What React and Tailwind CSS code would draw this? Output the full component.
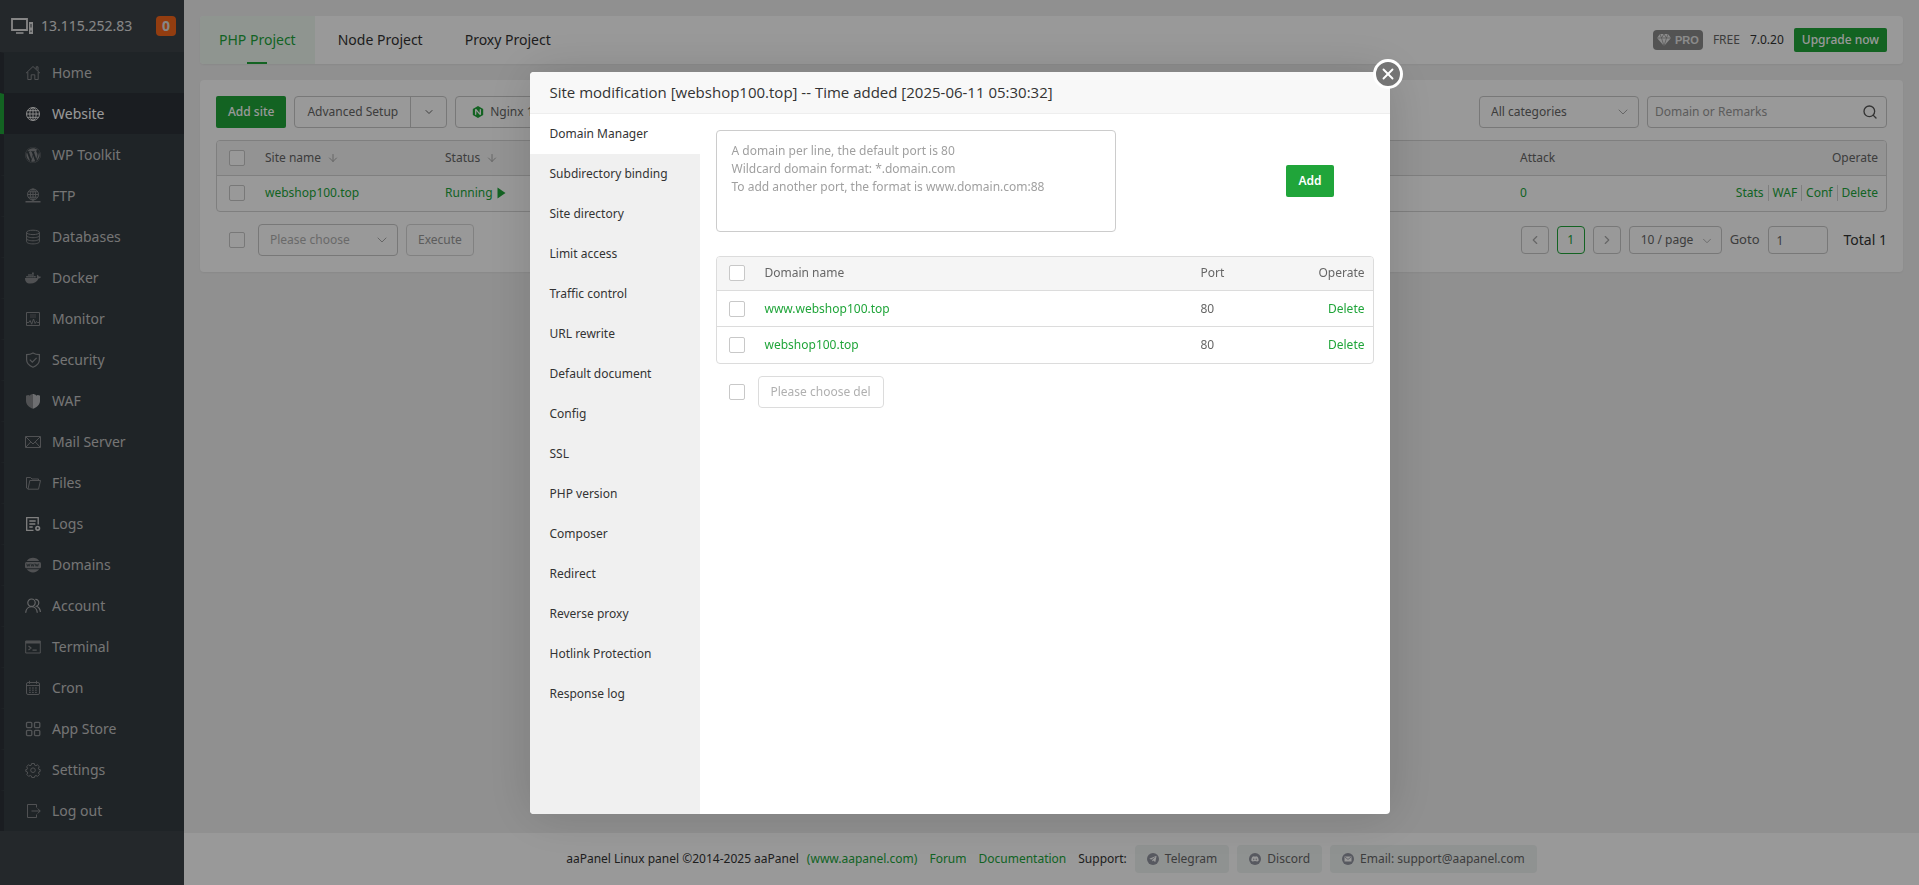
import { useState } from "react";
import { FaDiscord, FaDocker, FaTelegramPlane, FaWordpress } from "react-icons/fa";
import { SiNginx } from "react-icons/si";
import { ArrowDown, ChevronDown, ChevronLeft, ChevronRight, Search, X } from "lucide-react";

function Line({ children, w = 1, className = "" }) {
	return (
		<svg
			viewBox="0 0 16 16"
			className={`size-4 ${className}`}
			fill="none"
			stroke="currentColor"
			strokeWidth={w}
			aria-hidden="true"
		>
			{children}
		</svg>
	);
}

const icons = {
	home: (
		<Line>
			<path d="M1 8.2 8 1.5l7 6.7M2.8 7v7.5h3.4V9.8h3.6v4.7h3.4V7M11.2 4V1.8h1.8v3.9" />
		</Line>
	),
	website: (
		<Line className="text-[#e6e6e6]">
			<circle cx="8" cy="8" r="6.5" />
			<ellipse cx="8" cy="8" rx="3.2" ry="6.5" />
			<path d="M8 1.5v13M1.5 8h13M2.5 4.7h11M2.5 11.3h11" />
		</Line>
	),
	wordpress: <FaWordpress className="size-4" />,
	ftp: (
		<Line>
			<circle cx="8" cy="6.5" r="5.5" />
			<ellipse cx="8" cy="6.5" rx="2.7" ry="5.5" />
			<path d="M8 1v12M2.5 6.5h11M3.3 3.8h9.4M3.3 9.2h9.4" />
			<path d="M.5 13.8h15M6 13.8h4" strokeWidth="1.6" />
		</Line>
	),
	databases: (
		<Line>
			<ellipse cx="8" cy="3.4" rx="6.4" ry="2.2" />
			<path d="M1.6 3.4v9.3c0 1.2 2.8 2.2 6.4 2.2s6.4-1 6.4-2.2V3.4M1.6 6.5c0 1.2 2.8 2.2 6.4 2.2s6.4-1 6.4-2.2M1.6 9.6c0 1.2 2.8 2.2 6.4 2.2s6.4-1 6.4-2.2" />
		</Line>
	),
	docker: <FaDocker className="size-4" />,
	monitor: (
		<Line>
			<path d="M1.5 1.5h13v13h-13z" />
			<path d="M5 4h6M5 6h6" opacity=".6" />
			<path d="M1.5 11.5h2.3l1.3-2 1.6 3.7L8.5 8l1.6 4.5 1.4-2 1 1h2" />
		</Line>
	),
	security: (
		<Line w={1.2} className="text-[#8b8e91]">
			<path d="M8 1c2 1.2 4.2 1.6 6.4 1.6v5.2c0 3.6-2.8 6-6.4 7.4-3.6-1.4-6.4-3.8-6.4-7.4V2.6C3.8 2.6 6 2.2 8 1Z" />
			<path d="m4.8 7.6 2.5 2.5 4.3-4.3" />
		</Line>
	),
	waf: (
		<svg viewBox="0 0 16 16" className="size-4" fill="currentColor" aria-hidden="true">
			<path d="M8 .3v15.5C4.3 14.2 1 11.8 1 8V2.6h1.4v-.7h1.4v.7h1.3v-.9h1.4V1H8Z" />
			<path
				d="M8 .3v15.5c3.700-1.600 7-4 7-7.800V2.600h-1.400v-.7h-1.400v.7h-1.300v-.9H9.500V1H8Z"
				className="text-[#b8babc]"
			/>
		</svg>
	),
	mail: (
		<Line>
			<path d="M.5 2.5h15v11H.5zM1 3l7 7 7-7M1 13l4.7-5M15 13l-4.7-5" />
		</Line>
	),
	files: (
		<Line>
			<path d="M3 14 1.5 13V2.5h4L7 4h6.5v2M3 14.2l1.8-8.7h10.700l-2 8.700H3Z" />
		</Line>
	),
	logs: (
		<Line w={1.3} className="text-[#d5d5d5]">
			<path d="M8.5 14.4H1.7V1.6h11.5v7" />
			<path d="M4.3 5h6.4M4.3 8h6M4.3 11h3.4" />
			<circle cx="12.7" cy="12.3" r="1.8" strokeWidth="1.6" />
		</Line>
	),
	domains: (
		<svg viewBox="0 0 16 16" className="size-4" aria-hidden="true">
			<path d="M1.8 4a7.5 7.5 0 0 1 12.4 0ZM1.8 12.2a7.5 7.5 0 0 0 12.4 0Z" fill="currentColor" />
			<rect x="0" y="5" width="16" height="6.2" rx="1.5" fill="currentColor" />
			<path
				d="m1.700 6.700.8 2.600.8-2 .8 2 .8-2.600m1.100 0 .8 2.600.8-2 .8 2 .8-2.600m1.100 0 .8 2.600.8-2 .8 2 .8-2.600"
				fill="none"
				stroke="#353d42"
				strokeWidth=".8"
			/>
		</svg>
	),
	account: (
		<Line w={1.2} className="text-[#a9abad]">
			<circle cx="6.5" cy="4.7" r="3.7" />
			<path d="M.7 14.700c.2-3.700 2.700-6 5.800-6s5.600 2.300 5.800 6M10.300 1.400c2 .1 3.500 1.500 3.500 3.500 0 1.600-1 2.900-2.300 3.400 2.300.9 3.700 2.900 3.900 5.700" />
		</Line>
	),
	terminal: (
		<Line>
			<path d="M.7 2h14.600v12H.7z" />
			<path d="M.7 3.300h14.600" strokeWidth="2.4" />
			<path d="m3.500 7 2.500 2-2.500 2M7.500 11.200h4.200" strokeWidth="1.2" />
		</Line>
	),
	cron: (
		<Line>
			<rect x="1.5" y="2.5" width="13" height="12" rx="1.5" />
			<path d="M1.5 5.5h13M4.5.8v3M11.5.8v3" />
			<path d="M4 8h8M4 10.2h8M4 12.4h8" strokeDasharray="1.8 1.2" />
		</Line>
	),
	store: (
		<Line w={1.3} className="text-[#8b8e91]">
			<rect x="1.5" y="1.3" width="5.3" height="5.3" rx="1" />
			<rect x="9.5" y="1.3" width="5.3" height="5.3" rx="1" />
			<rect x="1.5" y="9.3" width="5.3" height="5.3" rx="1" />
			<rect x="9.5" y="9.3" width="5.3" height="5.3" rx="1" />
		</Line>
	),
	settings: (
		<Line>
			<path d="m6.600 1.500-.4 1.700-1.200.5-1.500-.9-1.900 1.900.9 1.500-.5 1.200-1.200.2v1.800l1.400.4.500 1.200-.9 1.500 1.900 1.900 1.500-.9 1.200.5.4 1.500h2.600l.4-1.500 1.200-.5 1.500.9 1.900-1.900-.9-1.500.5-1.200 1.200-.4V7.600l-1.300-.2-.5-1.200.9-1.500-1.900-1.900-1.500.9-1.200-.5-.4-1.700Z" />
			<circle cx="8" cy="8.2" r="2.3" />
		</Line>
	),
	logout: (
		<Line>
			<path d="M11.5 4.5v-3h-9v13h9v-3M6.5 8h8.7M12.7 5.5 15.2 8l-2.500 2.500" />
		</Line>
	),
};

const menu = [
	["Home", "home"],
	["Website", "website"],
	["WP Toolkit", "wordpress"],
	["FTP", "ftp"],
	["Databases", "databases"],
	["Docker", "docker"],
	["Monitor", "monitor"],
	["Security", "security"],
	["WAF", "waf"],
	["Mail Server", "mail"],
	["Files", "files"],
	["Logs", "logs"],
	["Domains", "domains"],
	["Account", "account"],
	["Terminal", "terminal"],
	["Cron", "cron"],
	["App Store", "store"],
	["Settings", "settings"],
	["Log out", "logout"],
];

const siteTabs = [
	"Domain Manager",
	"Subdirectory binding",
	"Site directory",
	"Limit access",
	"Traffic control",
	"URL rewrite",
	"Default document",
	"Config",
	"SSL",
	"PHP version",
	"Composer",
	"Redirect",
	"Reverse proxy",
	"Hotlink Protection",
	"Response log",
];

const domains = ["www.webshop100.top", "webshop100.top"];

function Checkbox({ label }) {
	return (
		<input
			type="checkbox"
			aria-label={label}
			className="block size-4 appearance-none rounded-xs border border-[#c8c8c8] bg-white checked:border-[#20a53a] checked:bg-[#20a53a]"
		/>
	);
}

function Sidebar() {
	return (
		<aside className="w-[184px] shrink-0 bg-[#3c4449]">
			<div className="flex h-[52px] items-center pl-[11px] pr-2 text-sm text-[#e0e0e0]">
				<svg viewBox="0 0 22 16" className="mr-2 h-4 w-[22px]" fill="none" stroke="currentColor" aria-hidden="true">
					<path d="M1 1h15v11H1z" strokeWidth="1.8" />
					<path d="M5 15h7.5" strokeWidth="1.6" />
					<path d="M18 4h4v12h-4z" fill="currentColor" stroke="none" />
					<path d="M20 6v3.5M20 12.5V14" stroke="#3c4449" />
				</svg>
				<span>13.115.252.83</span>
				<span className="ml-auto flex size-5 items-center justify-center rounded bg-[#f6661c] text-sm font-bold">
					0
				</span>
			</div>
			<nav>
				{menu.map(([name, icon]) => (
					<a
						key={name}
						href="#"
						className={
							name === "Website"
								? "flex h-[41px] items-center border-l-4 border-t border-l-[#20a53a] border-t-[#2c3137] bg-[#2c3137] pl-[21px] text-sm text-white"
								: "flex h-[41px] items-center border-l-4 border-t border-l-[#2c3137] border-t-[#353d42] bg-[#353d42] pl-[21px] text-sm text-[#c3c3c3]"
						}
					>
						<span className="mr-[11px] text-[#85888b]">{icons[icon]}</span>
						{name}
					</a>
				))}
			</nav>
		</aside>
	);
}

function TopBar() {
	return (
		<header className="flex h-12 items-center justify-between overflow-hidden rounded bg-white pr-4 shadow-xs">
			<nav className="flex h-full gap-1 text-sm text-[#333]">
				<a href="#" className="relative flex items-center bg-[#eff9f1] px-[19px] text-[#20a53a]">
					PHP Project
					<span className="absolute bottom-0 left-1/2 h-0.5 w-5 -translate-x-1/2 bg-[#20a53a]" />
				</a>
				<a href="#" className="flex items-center px-[19px]">
					Node Project
				</a>
				<a href="#" className="flex items-center px-[19px]">
					Proxy Project
				</a>
			</nav>
			<div className="flex items-center gap-2.5 text-xs">
				<span className="flex h-5 items-center gap-1 rounded bg-[#8a8a8a] px-1 font-bold text-[#e8e8e8]">
					<svg viewBox="0 0 14 12" className="h-3 w-3.5" fill="currentColor" aria-hidden="true">
						<path d="M3 0h8l3 4-7 8-7-8Z" />
						<path d="M0 4h14M3 0l1.5 4L7 12l2.5-8L11 0M4.5 4 7 0l2.500 4" fill="none" stroke="#8a8a8a" strokeWidth=".7" />
					</svg>
					<span className="font-['Liberation_Sans'] text-[11px]">PRO</span>
				</span>
				<span className="text-[#666]">FREE</span>
				<span className="text-[#333]">7.0.20</span>
				<button className="h-6 rounded-xs bg-[#20a53a] px-2 font-medium text-white">Upgrade now</button>
			</div>
		</header>
	);
}

function SiteList() {
	return (
		<section className="mt-4 rounded bg-white p-4 text-xs text-[#666] shadow-xs">
			<div className="flex items-center gap-2">
				<button className="h-8 rounded-xs bg-[#20a53a] px-3 font-medium text-white">Add site</button>
				<div className="flex h-8 rounded-sm border border-[#c8c8c8]">
					<button className="px-3">Advanced Setup</button>
					<button aria-label="More setup options" className="flex w-9 items-center justify-center border-l border-[#c8c8c8]">
						<ChevronDown className="size-3" />
					</button>
				</div>
				<button className="flex h-8 items-center gap-1.5 rounded-sm border border-[#c8c8c8] px-4">
					<SiNginx className="size-3 text-[#20a53a]" />
					Nginx 1.24.0
				</button>
				<div className="relative ml-auto">
					<select
						aria-label="Category"
						className="block h-8 w-40 appearance-none rounded-sm border border-[#c8c8c8] bg-white px-[11px]"
					>
						<option>All categories</option>
					</select>
					<ChevronDown className="pointer-events-none absolute right-2 top-2 size-4 text-[#aaa]" strokeWidth={1.5} />
				</div>
				<div className="flex h-8 w-60 items-center rounded-sm border border-[#c8c8c8] pl-[7px] pr-2">
					<input
						type="text"
						aria-label="Domain or Remarks"
						placeholder="Domain or Remarks"
						className="min-w-0 flex-1 outline-none placeholder:text-[#999]"
					/>
					<button aria-label="Search">
						<Search className="size-4 text-[#555]" />
					</button>
				</div>
			</div>

			<div className="mt-3 overflow-hidden rounded border border-[#d4d4d4]">
				<table className="w-full table-fixed text-left">
					<colgroup>
						<col className="w-10" />
						<col className="w-[180px]" />
						<col className="w-[1075px]" />
						<col />
						<col className="w-[200px]" />
					</colgroup>
					<thead>
						<tr className="h-[34px] border-b border-[#d4d4d4] bg-[#f5f5f5]">
							<th className="pl-3">
								<Checkbox label="Select all sites" />
							</th>
							<th className="px-2 font-normal">
								<span className="flex items-center gap-1.5">
									Site name
									<ArrowDown className="size-3 text-[#aaa]" />
								</span>
							</th>
							<th className="px-2 font-normal">
								<span className="flex items-center gap-1.5">
									Status
									<ArrowDown className="size-3 text-[#aaa]" />
								</span>
							</th>
							<th className="px-2 font-normal">Attack</th>
							<th className="px-2 text-right font-normal">Operate</th>
						</tr>
					</thead>
					<tbody>
						<tr className="h-9 text-[#20a53a]">
							<td className="pl-3">
								<Checkbox label="Select webshop100.top" />
							</td>
							<td className="px-2">
								<a href="#">webshop100.top</a>
							</td>
							<td className="px-2">
								<a href="#" className="flex items-center gap-1">
									Running
									<svg viewBox="0 0 9 12" className="h-3 w-[9px]" fill="currentColor" aria-hidden="true">
										<path d="M.5.5 8.5 6l-8 5.5Z" />
									</svg>
								</a>
							</td>
							<td className="px-2">
								<a href="#">0</a>
							</td>
							<td className="px-2">
								<div className="flex justify-end divide-x divide-[#d4d4d4]">
									<a href="#" className="pr-1">
										Stats
									</a>
									<a href="#" className="px-1">
										WAF
									</a>
									<a href="#" className="px-1">
										Conf
									</a>
									<a href="#" className="pl-1">
										Delete
									</a>
								</div>
							</td>
						</tr>
					</tbody>
				</table>
			</div>

			<div className="mt-3 flex items-center pl-[13px]">
				<Checkbox label="Select all sites on this page" />
				<div className="relative ml-[13px]">
					<select
						aria-label="Batch action"
						className="block h-8 w-[140px] appearance-none rounded-sm border border-[#c8c8c8] bg-white px-[11px] text-[#b0b0b0]"
					>
						<option>Please choose</option>
					</select>
					<ChevronDown className="pointer-events-none absolute right-2 top-2 size-4 text-[#aaa]" strokeWidth={1.5} />
				</div>
				<button className="ml-2 h-8 rounded-sm border border-[#d8d8d8] px-[11px] text-[#999]">Execute</button>

				<div className="ml-auto flex items-center gap-2">
					<button aria-label="Previous page" className="flex size-7 items-center justify-center rounded-sm border border-[#c8c8c8]">
						<ChevronLeft className="size-3.5 text-[#aaa]" />
					</button>
					<button className="size-7 rounded border border-[#20a53a] text-[#20a53a]">1</button>
					<button aria-label="Next page" className="flex size-7 items-center justify-center rounded-sm border border-[#c8c8c8]">
						<ChevronRight className="size-3.5 text-[#aaa]" />
					</button>
					<div className="relative">
						<select
							aria-label="Rows per page"
							className="block h-7 w-[93px] appearance-none rounded-sm border border-[#c8c8c8] bg-white px-[11px]"
						>
							<option>10 / page</option>
						</select>
						<ChevronDown className="pointer-events-none absolute right-2 top-2 size-3.5 text-[#aaa]" strokeWidth={1.5} />
					</div>
					<label htmlFor="goto" className="text-[13px]">
						Goto
					</label>
					<input
						id="goto"
						type="text"
						defaultValue="1"
						className="h-7 w-[60px] rounded-sm border border-[#c8c8c8] px-2"
					/>
					<span className="ml-2 text-sm text-[#333]">Total 1</span>
				</div>
			</div>
		</section>
	);
}

function Footer() {
	const chip = "flex h-7 items-center gap-1.5 rounded-sm bg-[#eff3f2] px-3 text-[#666]";
	const dot = "flex size-3 items-center justify-center rounded-full bg-[#9295a0] text-white";

	return (
		<footer className="mt-auto flex h-[52px] items-center justify-center bg-white text-xs text-[#333]">
			<span>aaPanel Linux panel ©2014-2025 aaPanel</span>
			<a href="#" className="ml-2 text-[#20a53a]">
				(www.aapanel.com)
			</a>
			<a href="#" className="ml-3 text-[#20a53a]">
				Forum
			</a>
			<a href="#" className="ml-3 text-[#20a53a]">
				Documentation
			</a>
			<span className="ml-3">Support:</span>
			<div className="ml-2 flex gap-2">
				<a href="#" className={chip}>
					<span className={dot}>
						<FaTelegramPlane className="size-2" />
					</span>
					Telegram
				</a>
				<a href="#" className={chip}>
					<span className={dot}>
						<FaDiscord className="size-2" />
					</span>
					Discord
				</a>
				<a href="#" className={chip}>
					<span className={dot}>
						<svg viewBox="0 0 8 6" className="h-1.5 w-2" aria-hidden="true">
							<path d="M.5.5h7v5h-7z" fill="currentColor" />
							<path d="M1 1.2 4 3.400l3-2.200" fill="none" stroke="#9295a0" strokeWidth=".8" />
						</svg>
					</span>
					Email: support@aapanel.com
				</a>
			</div>
		</footer>
	);
}

function SiteDialog({ onClose }) {
	const [tab, setTab] = useState("Domain Manager");

	return (
		<div className="fixed inset-0 flex items-center justify-center bg-black/40">
			<div
				role="dialog"
				aria-label="Site modification"
				className="relative flex min-h-[742px] w-[860px] max-w-full flex-col rounded-sm bg-white shadow-[1px_1px_50px_rgba(0,0,0,0.15)]"
			>
				<h2 className="flex h-[42px] items-center rounded-t-sm border-b border-[#eee] bg-[#f8f8f8] px-5 font-['Open_Sans',sans-serif] text-[15px] text-[#333]">
					Site modification [webshop100.top] -- Time added [2025-06-11 05:30:32]
				</h2>
				<button
					aria-label="Close"
					onClick={onClose}
					className="absolute -right-[13px] -top-[13px] flex size-[30px] items-center justify-center rounded-full border-3 border-white bg-[#757575] text-white"
				>
					<X className="size-[18px]" strokeWidth={2.5} />
				</button>
				<div className="flex flex-1">
					<nav className="flex w-[170px] shrink-0 flex-col rounded-bl-sm bg-[#f0f0f0] text-xs text-[#333]">
						{siteTabs.map((name) => (
							<button
								key={name}
								onClick={() => setTab(name)}
								className={tab === name ? "h-10 bg-white px-5 text-left" : "h-10 px-5 text-left"}
							>
								{name}
							</button>
						))}
					</nav>
					<div className="flex-1 p-4 text-xs text-[#666]">
						<div className="flex items-center">
							<textarea
								aria-label="Domains"
								placeholder={
									"A domain per line, the default port is 80\nWildcard domain format: *.domain.com\nTo add another port, the format is www.domain.com:88"
								}
								className="block h-[102px] w-[400px] resize-none rounded border border-[#ccc] px-[15px] py-[11px] leading-[18px] placeholder:text-[#a0a0a0]"
							/>
							<button className="ml-auto mr-10 h-8 rounded-xs bg-[#20a53a] px-3 font-semibold text-white">Add</button>
						</div>

						<div className="mt-6 overflow-hidden rounded border border-[#dcdcdc]">
							<table className="w-full table-fixed text-left">
								<colgroup>
									<col className="w-10" />
									<col />
									<col className="w-[101px]" />
									<col className="w-[79px]" />
								</colgroup>
								<thead>
									<tr className="h-[34px] bg-[#f5f5f5]">
										<th className="pl-3">
											<Checkbox label="Select all domains" />
										</th>
										<th className="px-2 font-normal">Domain name</th>
										<th className="px-2 font-normal">Port</th>
										<th className="px-2 text-right font-normal">Operate</th>
									</tr>
								</thead>
								<tbody>
									{domains.map((domain) => (
										<tr key={domain} className="h-9 border-t border-[#dcdcdc]">
											<td className="pl-3">
												<Checkbox label={`Select ${domain}`} />
											</td>
											<td className="px-2">
												<a href="#" className="text-[#20a53a]">
													{domain}
												</a>
											</td>
											<td className="px-2">80</td>
											<td className="px-2 text-right">
												<a href="#" className="text-[#20a53a]">
													Delete
												</a>
											</td>
										</tr>
									))}
								</tbody>
							</table>
						</div>

						<div className="mt-3 flex items-center pl-[13px]">
							<Checkbox label="Select all domains on this page" />
							<button className="ml-[13px] h-8 rounded-sm border border-[#dcdcdc] px-3 text-[#b0b0b0]">
								Please choose del
							</button>
						</div>
					</div>
				</div>
			</div>
		</div>
	);
}

export default function App() {
	const [open, setOpen] = useState(true);

	return (
		<div className="flex min-h-screen bg-[#f0f0f0] font-['Noto_Sans',sans-serif]">
			<Sidebar />
			<div className="flex min-w-0 flex-1 flex-col">
				<main className="p-4">
					<TopBar />
					<SiteList />
				</main>
				<Footer />
			</div>
			{open && <SiteDialog onClose={() => setOpen(false)} />}
		</div>
	);
}
